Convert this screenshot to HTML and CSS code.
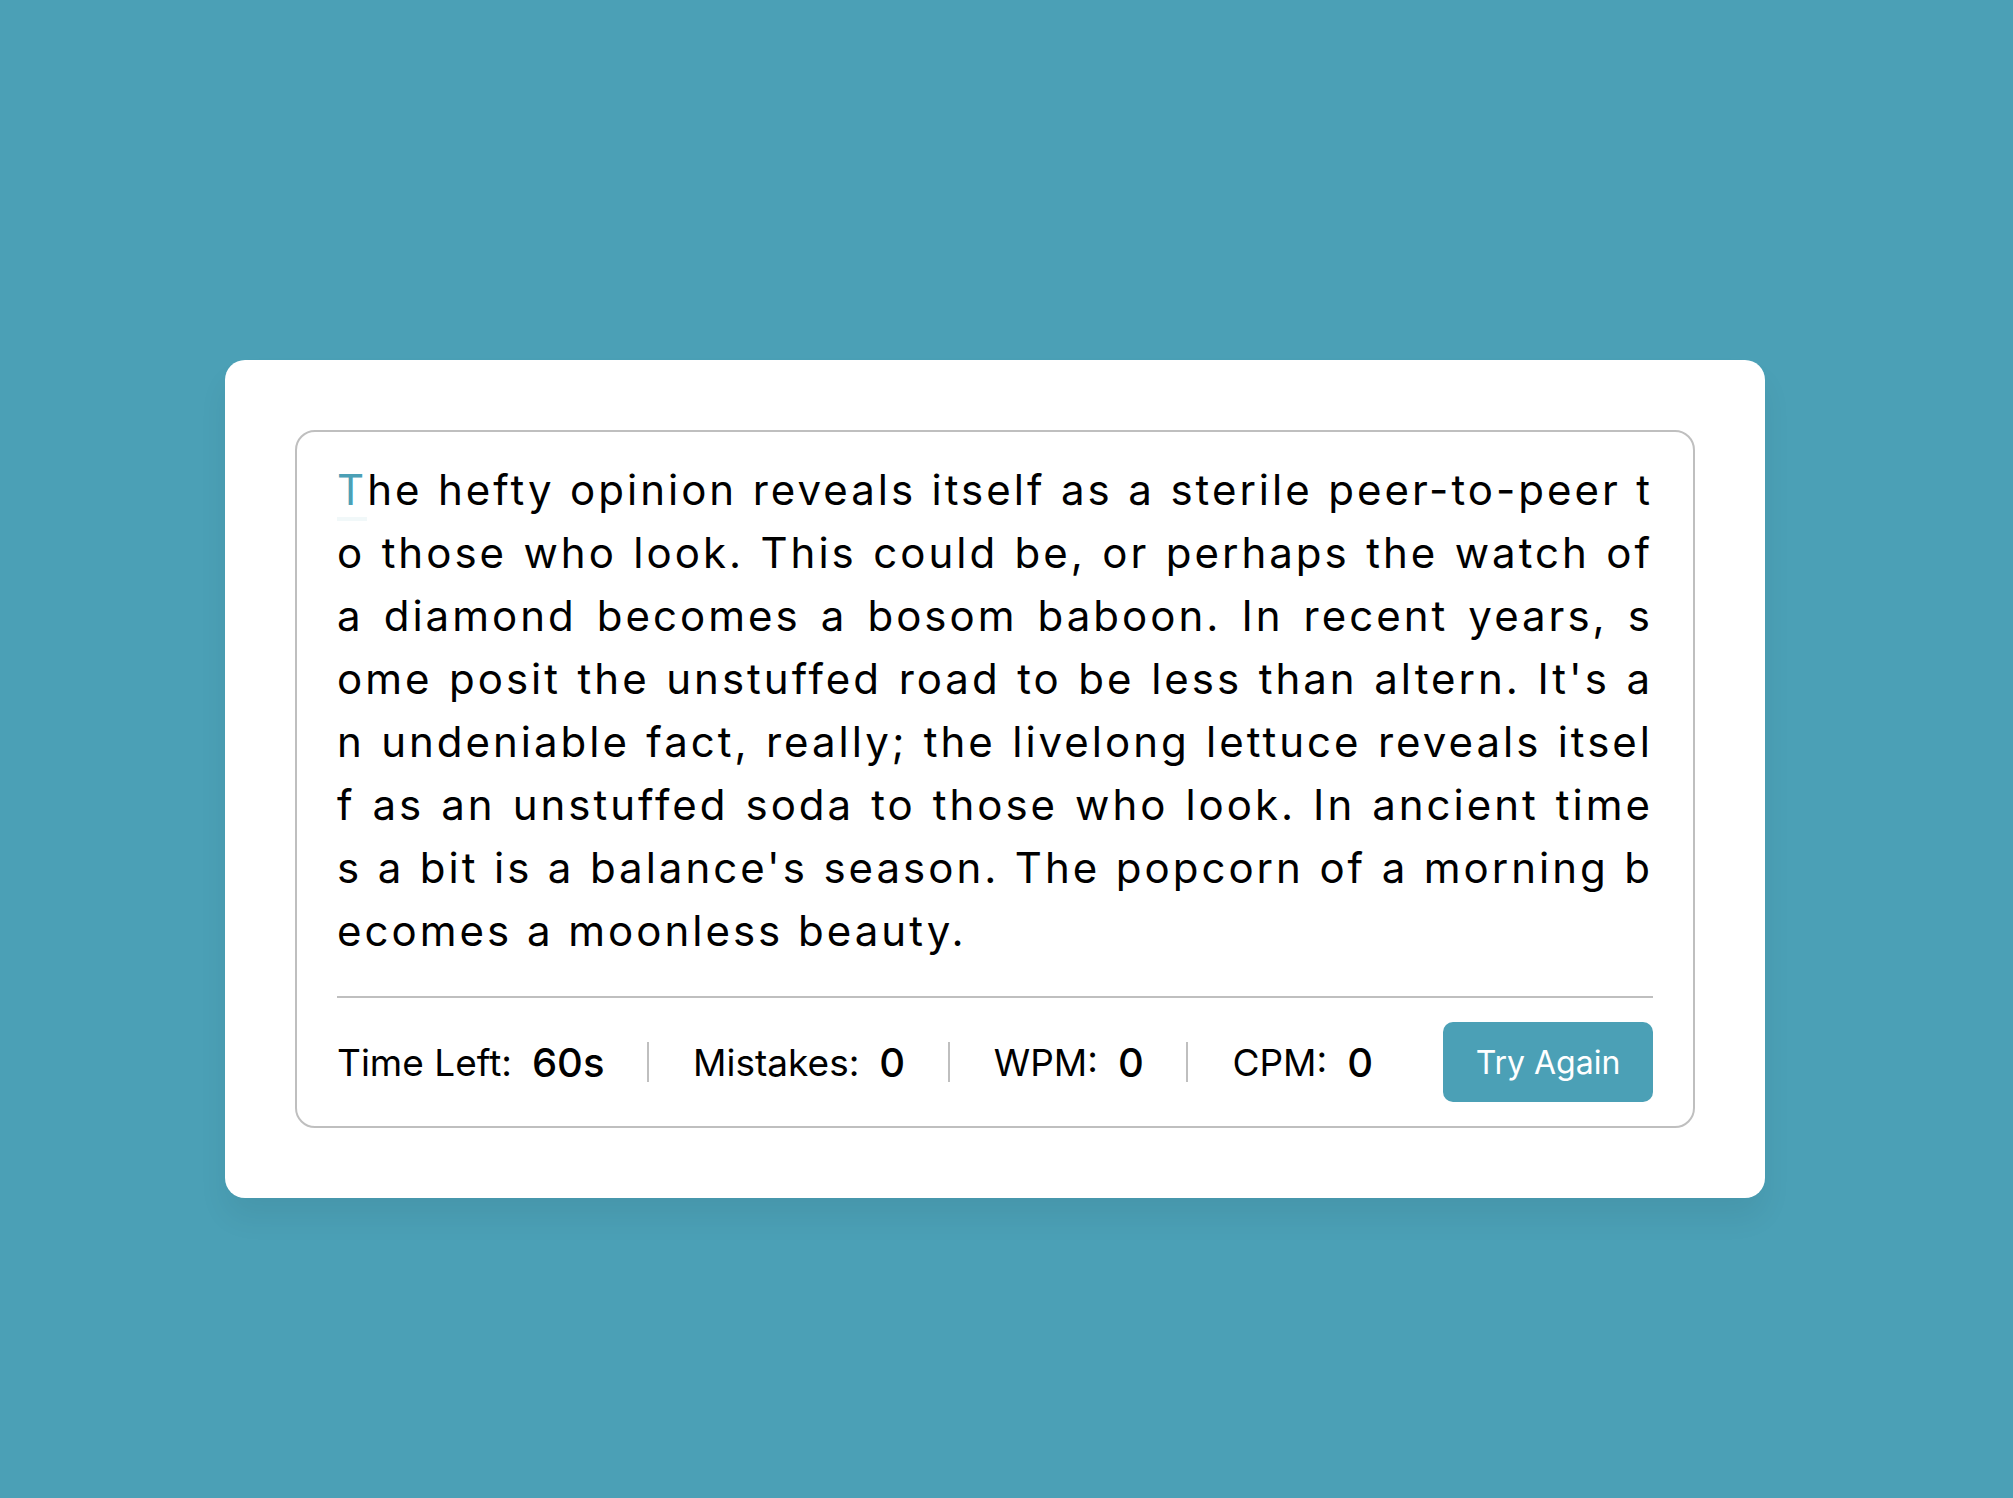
FILE: index.html
```html
<!DOCTYPE html>
<html lang="en">
<head>
<meta charset="utf-8">
<title>Typing Speed Test</title>
<link rel="stylesheet" href="styles.css">
</head>
<body>
<div class="wrapper">
  <div class="content-box">
    <div class="typing-text">
      <p>
        <span class="line"><span class="active">T</span>he hefty opinion reveals itself as a sterile peer-to-peer t</span>
        <span class="line">o those who look. This could be, or perhaps the watch of</span>
        <span class="line">a diamond becomes a bosom baboon. In recent years, s</span>
        <span class="line">ome posit the unstuffed road to be less than altern. It's a</span>
        <span class="line">n undeniable fact, really; the livelong lettuce reveals itsel</span>
        <span class="line">f as an unstuffed soda to those who look. In ancient time</span>
        <span class="line">s a bit is a balance's season. The popcorn of a morning b</span>
        <span class="line last">ecomes a moonless beauty.</span>
      </p>
    </div>
    <div class="content">
      <ul class="result-details">
        <li><p>Time Left:</p><span><b>60</b>s</span></li>
        <li><p>Mistakes:</p><span>0</span></li>
        <li><p>WPM:</p><span>0</span></li>
        <li><p>CPM:</p><span>0</span></li>
      </ul>
      <button class="btn">Try Again</button>
    </div>
  </div>
</div>
</body>
</html>
```

FILE: styles.css
```css
* {
  margin: 0;
  padding: 0;
  box-sizing: border-box;
}

body {
  background: #4ba0b6;
  font-family: "Inter", "Noto Sans", "Liberation Sans", sans-serif;
  color: #000;
  min-height: 1498px;
  padding: 360px 0 0 225px;
}

.wrapper {
  width: 1540px;
  padding: 70px;
  background: #fff;
  border-radius: 20px;
  box-shadow: 0 20px 30px rgba(0, 0, 0, 0.06);
}

.content-box {
  border: 2px solid #bfbfbf;
  border-radius: 20px;
  padding: 26px 40px 0;
}

.typing-text p {
  font-size: 42px;
  line-height: 63px;
  letter-spacing: 3px;
  font-weight: 400;
}

.line {
  display: block;
  white-space: nowrap;
  text-align: justify;
  text-align-last: justify;
}

.line.last {
  text-align-last: left;
}

.active {
  color: #4ba0b6;
  position: relative;
}

.active::before {
  content: "";
  position: absolute;
  left: 0;
  bottom: -6px;
  width: 100%;
  height: 4px;
  background: #4ba0b6;
  opacity: 0.08;
}

.content {
  margin-top: 34px;
  border-top: 2px solid #bfbfbf;
  padding: 24px 0;
  display: flex;
  justify-content: space-between;
  align-items: center;
}

.result-details {
  list-style: none;
  display: flex;
  justify-content: space-between;
  width: calc(100% - 280px);
}

.result-details li {
  display: flex;
  align-items: center;
  height: 40px;
}

.result-details li:not(:first-child) {
  padding-left: 44px;
  border-left: 2px solid #bfbfbf;
}

.result-details li p {
  font-size: 37px;
}

.result-details li span {
  font-size: 40px;
  font-weight: 500;
  margin-left: 20px;
}

.result-details li span b {
  font-weight: 500;
}

.btn {
  width: 210px;
  height: 80px;
  border: none;
  border-radius: 10px;
  background: #4ba0b6;
  color: #fff;
  font-family: inherit;
  font-size: 32px;
}
```
